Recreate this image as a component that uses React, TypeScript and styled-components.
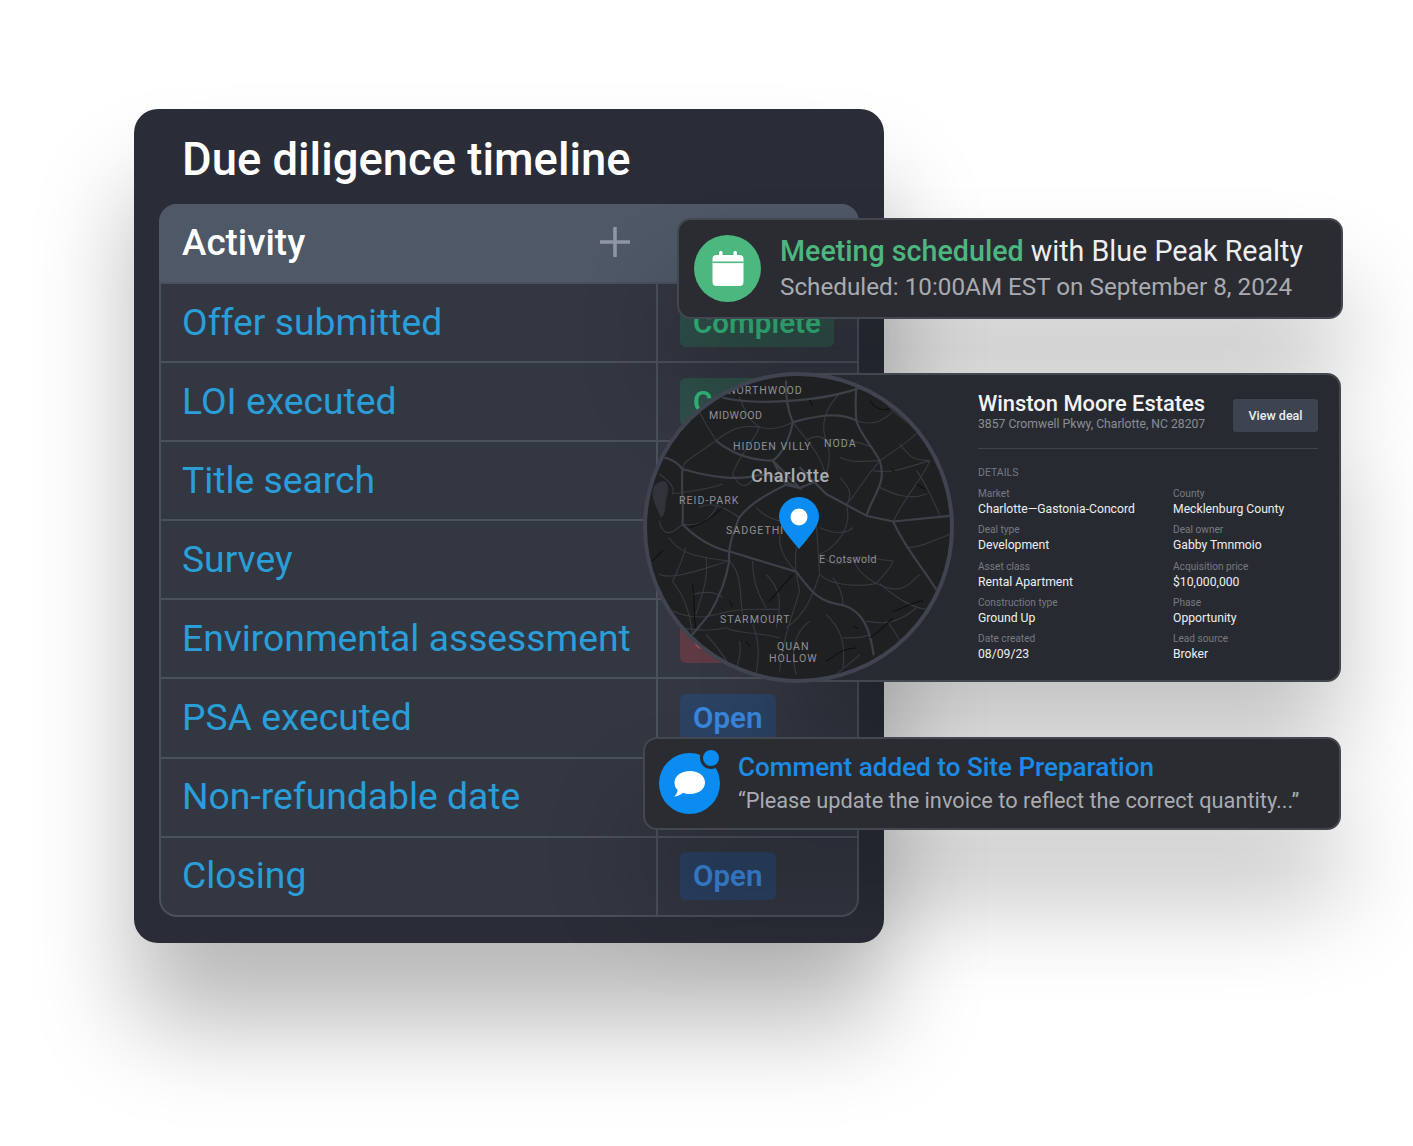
import * as React from "react";
import styled, { createGlobalStyle } from "styled-components";

const GlobalStyle = createGlobalStyle`
  html, body { margin: 0; padding: 0; background: #fff; overflow: hidden; }
  * { box-sizing: border-box; }
`;

type Tone = "green" | "red" | "blue";

const toneBg: Record<Tone, string> = { green: "#2f5049", red: "#5d3a44", blue: "#2b4263" };
const toneText: Record<Tone, string> = { green: "#34b67c", red: "#e0525a", blue: "#3a86dc" };

const Stage = styled.div`
  position: relative;
  width: 1413px;
  height: 1146px;
  padding: 109px 0 0 134px;
  overflow: hidden;
  background: #fff;
  font-family: Roboto, "Liberation Sans", sans-serif;
`;

const Panel = styled.section`
  width: 750px;
  height: 834px;
  padding: 0 25px;
  border-radius: 24px;
  background: #2a2d37;
  box-shadow: 0 80px 100px rgba(0, 0, 0, 0.28);
`;

const Title = styled.h1`
  margin: 0;
  height: 95px;
  padding: 21px 0 0 23px;
  font-size: 45.4px;
  line-height: 60px;
  font-weight: 500;
  color: #fff;
`;

const Table = styled.div`
  width: 700px;
  height: 713px;
  border: 2px solid #4a505c;
  border-radius: 18px;
  background: #333742;
`;

const HeaderRow = styled.div`
  display: flex;
  align-items: center;
  height: 78px;
  width: 700px;
  margin: -2px -2px 0;
  padding: 0 0 2px 23px;
  border-radius: 18px 18px 0 0;
  background: #4e5866;
  color: #fff;
  font-size: 36.8px;
  font-weight: 500;
`;

const HeaderLabel = styled.span`
  width: 448px;
  display: flex;
  align-items: center;
  justify-content: space-between;
`;

const Row = styled.div`
  display: grid;
  grid-template-columns: 495px 1fr;
  height: 79.1px;
  border-top: 2px solid #4a505c;
  &:first-of-type { border-top: 0; }
`;

const ActivityCell = styled.div`
  display: flex;
  align-items: center;
  padding: 0 0 2px 21px;
  font-size: 37.25px;
  color: #2a9ed9;
  white-space: nowrap;
`;

const StatusCell = styled.div`
  display: flex;
  align-items: center;
  padding-left: 22px;
  border-left: 2px solid #4a505c;
`;

const Badge = styled.span<{ $tone: Tone }>`
  display: inline-flex;
  align-items: center;
  height: 48px;
  padding: 0 13px;
  border-radius: 6px;
  font-size: 29.6px;
  font-weight: 600;
  background: ${(p) => toneBg[p.$tone]};
  color: ${(p) => toneText[p.$tone]};
`;

const Toast = styled.div`
  position: absolute;
  display: flex;
  align-items: center;
  border: 2px solid #43474f;
  border-radius: 14px;
  background: #2a2c32;
  box-shadow: 0 70px 100px rgba(0, 0, 0, 0.24);
`;

const MeetingToast = styled(Toast)`
  left: 677px;
  top: 218px;
  width: 666px;
  height: 101px;
  padding-left: 15px;
  gap: 19px;
`;

const CommentToast = styled(Toast)`
  left: 643px;
  top: 737px;
  width: 698px;
  height: 93px;
  padding-left: 14px;
  gap: 18px;
`;

const IconDisc = styled.div<{ $bg: string; $size: number }>`
  position: relative;
  flex: none;
  display: flex;
  align-items: center;
  justify-content: center;
  width: ${(p) => p.$size}px;
  height: ${(p) => p.$size}px;
  border-radius: 50%;
  background: ${(p) => p.$bg};
`;

const Dot = styled.span`
  position: absolute;
  top: -6px;
  right: -2px;
  width: 22px;
  height: 22px;
  border: 3px solid #2a2c32;
  border-radius: 50%;
  background: #0a8cf0;
`;

const ToastText = styled.div`
  display: flex;
  flex-direction: column;
`;

const ToastTitle = styled.div<{ $size: number; $line: number }>`
  font-size: ${(p) => p.$size}px;
  line-height: ${(p) => p.$line}px;
  color: #eceef0;
  white-space: nowrap;
`;

const Accent = styled.span<{ $color: string }>`
  color: ${(p) => p.$color};
  font-weight: 500;
`;

const ToastSub = styled.div<{ $size: number; $line: number }>`
  font-size: ${(p) => p.$size}px;
  line-height: ${(p) => p.$line}px;
  color: #a9abb0;
  white-space: nowrap;
`;

const DealCard = styled.div`
  position: absolute;
  left: 800px;
  top: 373px;
  width: 541px;
  height: 309px;
  padding: 16px 21px 0 176px;
  border: 2px solid #43474f;
  border-radius: 14px;
  background: #282a31;
  box-shadow: 0 70px 100px rgba(0, 0, 0, 0.24);
`;

const DealHead = styled.div`
  display: flex;
  align-items: flex-start;
  justify-content: space-between;
  height: 58px;
  border-bottom: 1px solid #3d424c;
`;

const DealName = styled.div`
  font-size: 21.9px;
  line-height: 26px;
  font-weight: 500;
  color: #f2f3f4;
  white-space: nowrap;
`;

const DealAddress = styled.div`
  font-size: 12.2px;
  line-height: 14px;
  color: #8a8d94;
  white-space: nowrap;
`;

const ViewDeal = styled.button`
  width: 85px;
  height: 33px;
  margin-top: 8px;
  border: 0;
  border-radius: 3px;
  background: #3d4450;
  color: #eceef0;
  font-family: inherit;
  font-size: 12.5px;
  font-weight: 500;
`;

const DetailsLabel = styled.div`
  margin-top: 17px;
  font-size: 10.5px;
  line-height: 13px;
  color: #737986;
`;

const DetailGrid = styled.div`
  display: grid;
  grid-template-columns: 195px 1fr;
  grid-auto-rows: 36.25px;
  margin-top: 8px;
`;

const DetailLabel = styled.div`
  font-size: 10.15px;
  line-height: 14px;
  color: #777a82;
`;

const DetailValue = styled.div`
  font-size: 12.2px;
  line-height: 16px;
  color: #eceef0;
  white-space: nowrap;
`;

const MapDisc = styled.div`
  position: absolute;
  left: 643px;
  top: 372px;
  width: 311px;
  height: 311px;
  border: 4px solid #3f4450;
  border-radius: 50%;
  background: #1f2022;
  overflow: hidden;
`;

const RoadLayer = styled.svg`
  position: absolute;
  left: -4px;
  top: -4px;
  width: 311px;
  height: 311px;
`;

const PinIcon = styled.svg`
  position: absolute;
  left: 132px;
  top: 121px;
  width: 40px;
  height: 52px;
`;

const Place = styled.span<{ $x: number; $y: number; $city?: boolean; $caps?: boolean }>`
  position: absolute;
  left: ${(p) => p.$x}px;
  top: ${(p) => p.$y}px;
  font-size: ${(p) => (p.$city ? 18 : 10.6)}px;
  font-weight: ${(p) => (p.$city ? 500 : 400)};
  line-height: 12px;
  letter-spacing: ${(p) => (p.$caps ? 1 : 0.5)}px;
  text-align: center;
  color: ${(p) => (p.$city ? "#a9abae" : "#8f9093")};
  white-space: nowrap;
`;

const rows: { name: string; status?: string; tone?: Tone }[] = [
  { name: "Offer submitted", status: "Complete", tone: "green" },
  { name: "LOI executed", status: "Complete", tone: "green" },
  { name: "Title search" },
  { name: "Survey" },
  { name: "Environmental assessment", status: "Cancelled", tone: "red" },
  { name: "PSA executed", status: "Open", tone: "blue" },
  { name: "Non-refundable date" },
  { name: "Closing", status: "Open", tone: "blue" },
];

const details = [
  ["Market", "Charlotte—Gastonia-Concord"],
  ["County", "Mecklenburg County"],
  ["Deal type", "Development"],
  ["Deal owner", "Gabby Tmnmoio"],
  ["Asset class", "Rental Apartment"],
  ["Acquisition price", "$10,000,000"],
  ["Construction type", "Ground Up"],
  ["Phase", "Opportunity"],
  ["Date created", "08/09/23"],
  ["Lead source", "Broker"],
];

// traced from the map, in 3x crop coordinates
const majorRoads = [
  "M250,112 C320,128 400,126 470,120 S620,100 690,72",
  "M440,60 C438,100 445,150 460,185 C452,230 430,280 400,300",
  "M130,325 C220,352 300,358 350,345 S450,372 480,382 L560,350",
  "M20,290 C70,280 110,298 130,325 C125,380 135,450 130,490",
  "M480,320 L560,400 L620,432 L680,465 L760,482 L930,465",
  "M680,465 C700,400 742,370 720,300 C700,260 660,220 650,180 C645,130 650,90 650,60",
  "M440,372 C380,400 330,430 300,470 C280,520 265,560 270,600 C260,660 240,710 210,760 L158,822",
  "M130,490 C170,530 220,560 270,572 C330,590 400,610 470,632",
  "M470,632 C520,700 540,722 610,732 C670,752 690,800 702,882",
  "M760,482 C800,570 850,620 892,690",
  "M460,185 C520,170 590,150 650,180",
  "M400,300 L480,382 L440,372 L400,300",
  "M230,240 C280,280 340,300 400,300",
];
const minorRoads = [
  "M100,750 C150,772 190,772 230,760 C300,740 340,745 420,745",
  "M470,560 C465,620 470,640 480,690 C460,760 430,830 420,930",
  "M530,480 L540,640 C570,670 640,680 710,668",
  "M620,432 C640,500 590,560 540,580",
  "M600,100 C560,140 540,190 560,240 C580,290 560,330 560,350",
  "M780,130 C740,180 700,200 650,180",
  "M870,300 C850,350 800,400 760,482",
  "M170,130 C190,180 220,220 230,240 C180,280 130,300 130,325",
  "M90,530 C120,580 180,590 270,600 C310,640 300,700 310,760",
  "M360,200 C340,250 300,280 280,340",
  "M720,668 C780,720 820,740 860,745",
  "M840,640 C800,680 780,700 712,668",
  "M380,640 C420,680 430,720 410,800",
  "M260,800 C300,820 340,810 420,830",
  "M100,660 C130,700 150,740 160,820",
  "M560,760 C600,800 620,840 610,920",
  "M700,330 C760,340 800,320 870,300",
  "M460,185 C500,240 540,270 560,350",
  "M620,432 C650,400 660,370 720,300",
  "M850,200 C810,240 780,260 720,300",
  "M60,640 C100,660 200,620 270,600",
  "M510,780 C470,810 450,860 470,940",
  "M540,640 C520,700 500,760 440,800",
  "M300,840 C310,880 290,920 280,950",
  "M800,560 C840,560 880,540 930,520",
  "M430,480 C410,540 420,580 470,632",
  "M240,420 C220,470 190,500 130,490",
  "M540,500 C580,520 620,520 640,500",
  "M230,240 C270,210 300,190 360,200 C400,210 430,200 460,185",
  "M300,110 C320,160 330,180 360,200",
  "M740,130 C790,190 850,200 890,280",
  "M780,250 C810,290 820,300 870,300",
  "M560,240 C610,230 640,240 700,260",
  "M600,290 C640,310 670,300 720,300",
  "M600,350 C630,380 640,400 620,432",
  "M720,380 C760,400 810,420 860,400",
  "M830,330 C860,370 880,420 900,465",
  "M100,400 C150,390 200,390 250,370",
  "M60,340 C90,360 110,380 100,400",
  "M180,440 C210,420 260,440 300,470",
  "M350,440 C380,470 410,480 430,480",
  "M60,480 C70,520 90,530 130,490",
  "M140,560 C130,600 110,640 100,660",
  "M200,590 C210,640 190,700 170,760",
  "M340,600 C340,650 350,690 380,740",
  "M540,580 C570,610 600,620 640,590 C680,580 720,600 760,600",
  "M640,590 C650,630 680,650 710,668",
  "M760,600 C750,630 720,650 710,668",
  "M580,650 C600,680 610,700 610,732",
  "M680,780 C730,790 770,790 830,740",
  "M780,840 C760,800 750,790 740,780",
  "M610,830 C650,830 670,830 690,820",
  "M200,820 C230,850 250,880 270,910",
  "M340,790 C360,840 360,880 350,940",
  "M160,700 C200,690 230,690 250,710",
  "M130,800 C180,810 220,810 260,800",
  "M660,880 C640,900 610,920 590,940",
  "M500,240 C530,220 550,230 560,240",
  "M280,340 C300,380 320,390 350,345",
];
const creeks = [
  "M40,600 L70,570", "M150,500 C190,490 220,470 250,440", "M390,720 L460,640",
  "M160,670 C170,720 160,760 170,800", "M760,750 C800,740 820,720 850,720",
  "M690,830 C720,810 740,790 760,770", "M510,120 L520,135", "M830,370 L855,385",
  "M560,900 C590,880 610,860 650,860", "M690,120 C710,150 730,150 750,145",
  "M270,720 L280,735", "M320,840 L330,855", "M640,795 L655,802", "M755,325 L765,335",
];

export default function App() {
  return (
    <Stage>
      <GlobalStyle />
      <Panel>
        <Title>Due diligence timeline</Title>
        <Table>
          <HeaderRow>
            <HeaderLabel>
              Activity
              <svg width="30" height="30" viewBox="0 0 30 30" aria-hidden="true">
                <path d="M15 1V29M1 15H29" stroke="#8e97a3" strokeWidth="3.6" strokeLinecap="round" />
              </svg>
            </HeaderLabel>
          </HeaderRow>
          {rows.map((row) => (
            <Row key={row.name}>
              <ActivityCell>{row.name}</ActivityCell>
              <StatusCell>
                {row.status && row.tone && <Badge $tone={row.tone}>{row.status}</Badge>}
              </StatusCell>
            </Row>
          ))}
        </Table>
      </Panel>

      <MeetingToast>
        <IconDisc $bg="#4cb77f" $size={67}>
          <svg width="32" height="35" viewBox="0 0 32 35" aria-hidden="true">
            <rect x="0.5" y="4" width="31" height="31" rx="4" fill="#fff" />
            <rect x="7" y="0" width="3.5" height="8" rx="1.5" fill="#fff" />
            <rect x="21.5" y="0" width="3.5" height="8" rx="1.5" fill="#fff" />
            <rect x="0.5" y="10.500" width="31" height="1.6" fill="#4cb77f" />
          </svg>
        </IconDisc>
        <ToastText>
          <ToastTitle $size={28.65} $line={36}>
            <Accent $color="#4cb77f">Meeting scheduled</Accent> with Blue Peak Realty
          </ToastTitle>
          <ToastSub $size={24.26} $line={36}>Scheduled: 10:00AM EST on September 8, 2024</ToastSub>
        </ToastText>
      </MeetingToast>

      <DealCard>
        <DealHead>
          <div>
            <DealName>Winston Moore Estates</DealName>
            <DealAddress>3857 Cromwell Pkwy, Charlotte, NC 28207</DealAddress>
          </div>
          <ViewDeal>View deal</ViewDeal>
        </DealHead>
        <DetailsLabel>DETAILS</DetailsLabel>
        <DetailGrid>
          {details.map(([label, value]) => (
            <div key={label}>
              <DetailLabel>{label}</DetailLabel>
              <DetailValue>{value}</DetailValue>
            </div>
          ))}
        </DetailGrid>
      </DealCard>

      <MapDisc>
        <RoadLayer viewBox="12 35 930 930" aria-hidden="true">
          <path d="M45,375 C70,350 95,360 85,400 C75,430 85,460 65,470 C55,440 30,410 45,375Z" fill="#30333a" />
          {minorRoads.map((d) => (
            <path key={d} d={d} fill="none" stroke="#363941" strokeWidth="3.4" />
          ))}
          {majorRoads.map((d) => (
            <path key={d} d={d} fill="none" stroke="#3c4048" strokeWidth="6.5" />
          ))}
          {creeks.map((d) => (
            <path key={d} d={d} fill="none" stroke="#0e0e0f" strokeWidth="3" />
          ))}
        </RoadLayer>
        <Place $x={81} $y={9} $caps>NORTHWOOD</Place>
        <Place $x={62} $y={34}>MIDWOOD</Place>
        <Place $x={86} $y={65} $caps>HIDDEN VILLY</Place>
        <Place $x={177} $y={62} $caps>NODA</Place>
        <Place $x={104} $y={94} $city>Charlotte</Place>
        <Place $x={32} $y={119} $caps>REID-PARK</Place>
        <Place $x={79} $y={149} $caps>SADGETHI</Place>
        <Place $x={172} $y={178}>E Cotswold</Place>
        <Place $x={73} $y={238} $caps>STARMOURT</Place>
        <Place $x={122} $y={265} $caps>
          QUAN
          <br />
          HOLLOW
        </Place>
        <PinIcon viewBox="0 0 40 52" aria-hidden="true">
          <path d="M20 0C31 0 40 9 40 20C40 30 28 42 20 52C12 42 0 30 0 20C0 9 9 0 20 0Z" fill="#0a8cf0" />
          <circle cx="20" cy="20" r="8.5" fill="#fff" />
        </PinIcon>
      </MapDisc>

      <CommentToast>
        <IconDisc $bg="#0a8cf0" $size={61}>
          <svg width="33" height="28" viewBox="0 0 33 28" aria-hidden="true">
            <path d="M17 1C26 1 32 6 32 12.500C32 19 26 24 17 24C14.500 24 12 23.600 10 22.800C7.500 25 4 26.500 1 26.500C3.500 24.500 4.500 22.500 4.600 20C2.500 18 1.500 15.500 1.500 12.500C1.500 6 8 1 17 1Z" fill="#fff" />
          </svg>
          <Dot />
        </IconDisc>
        <ToastText>
          <ToastTitle $size={26.06} $line={33}>
            <Accent $color="#1a8ce8">Comment added to Site Preparation</Accent>
          </ToastTitle>
          <ToastSub $size={21.75} $line={33}>“Please update the invoice to reflect the correct quantity...”</ToastSub>
        </ToastText>
      </CommentToast>
    </Stage>
  );
}
